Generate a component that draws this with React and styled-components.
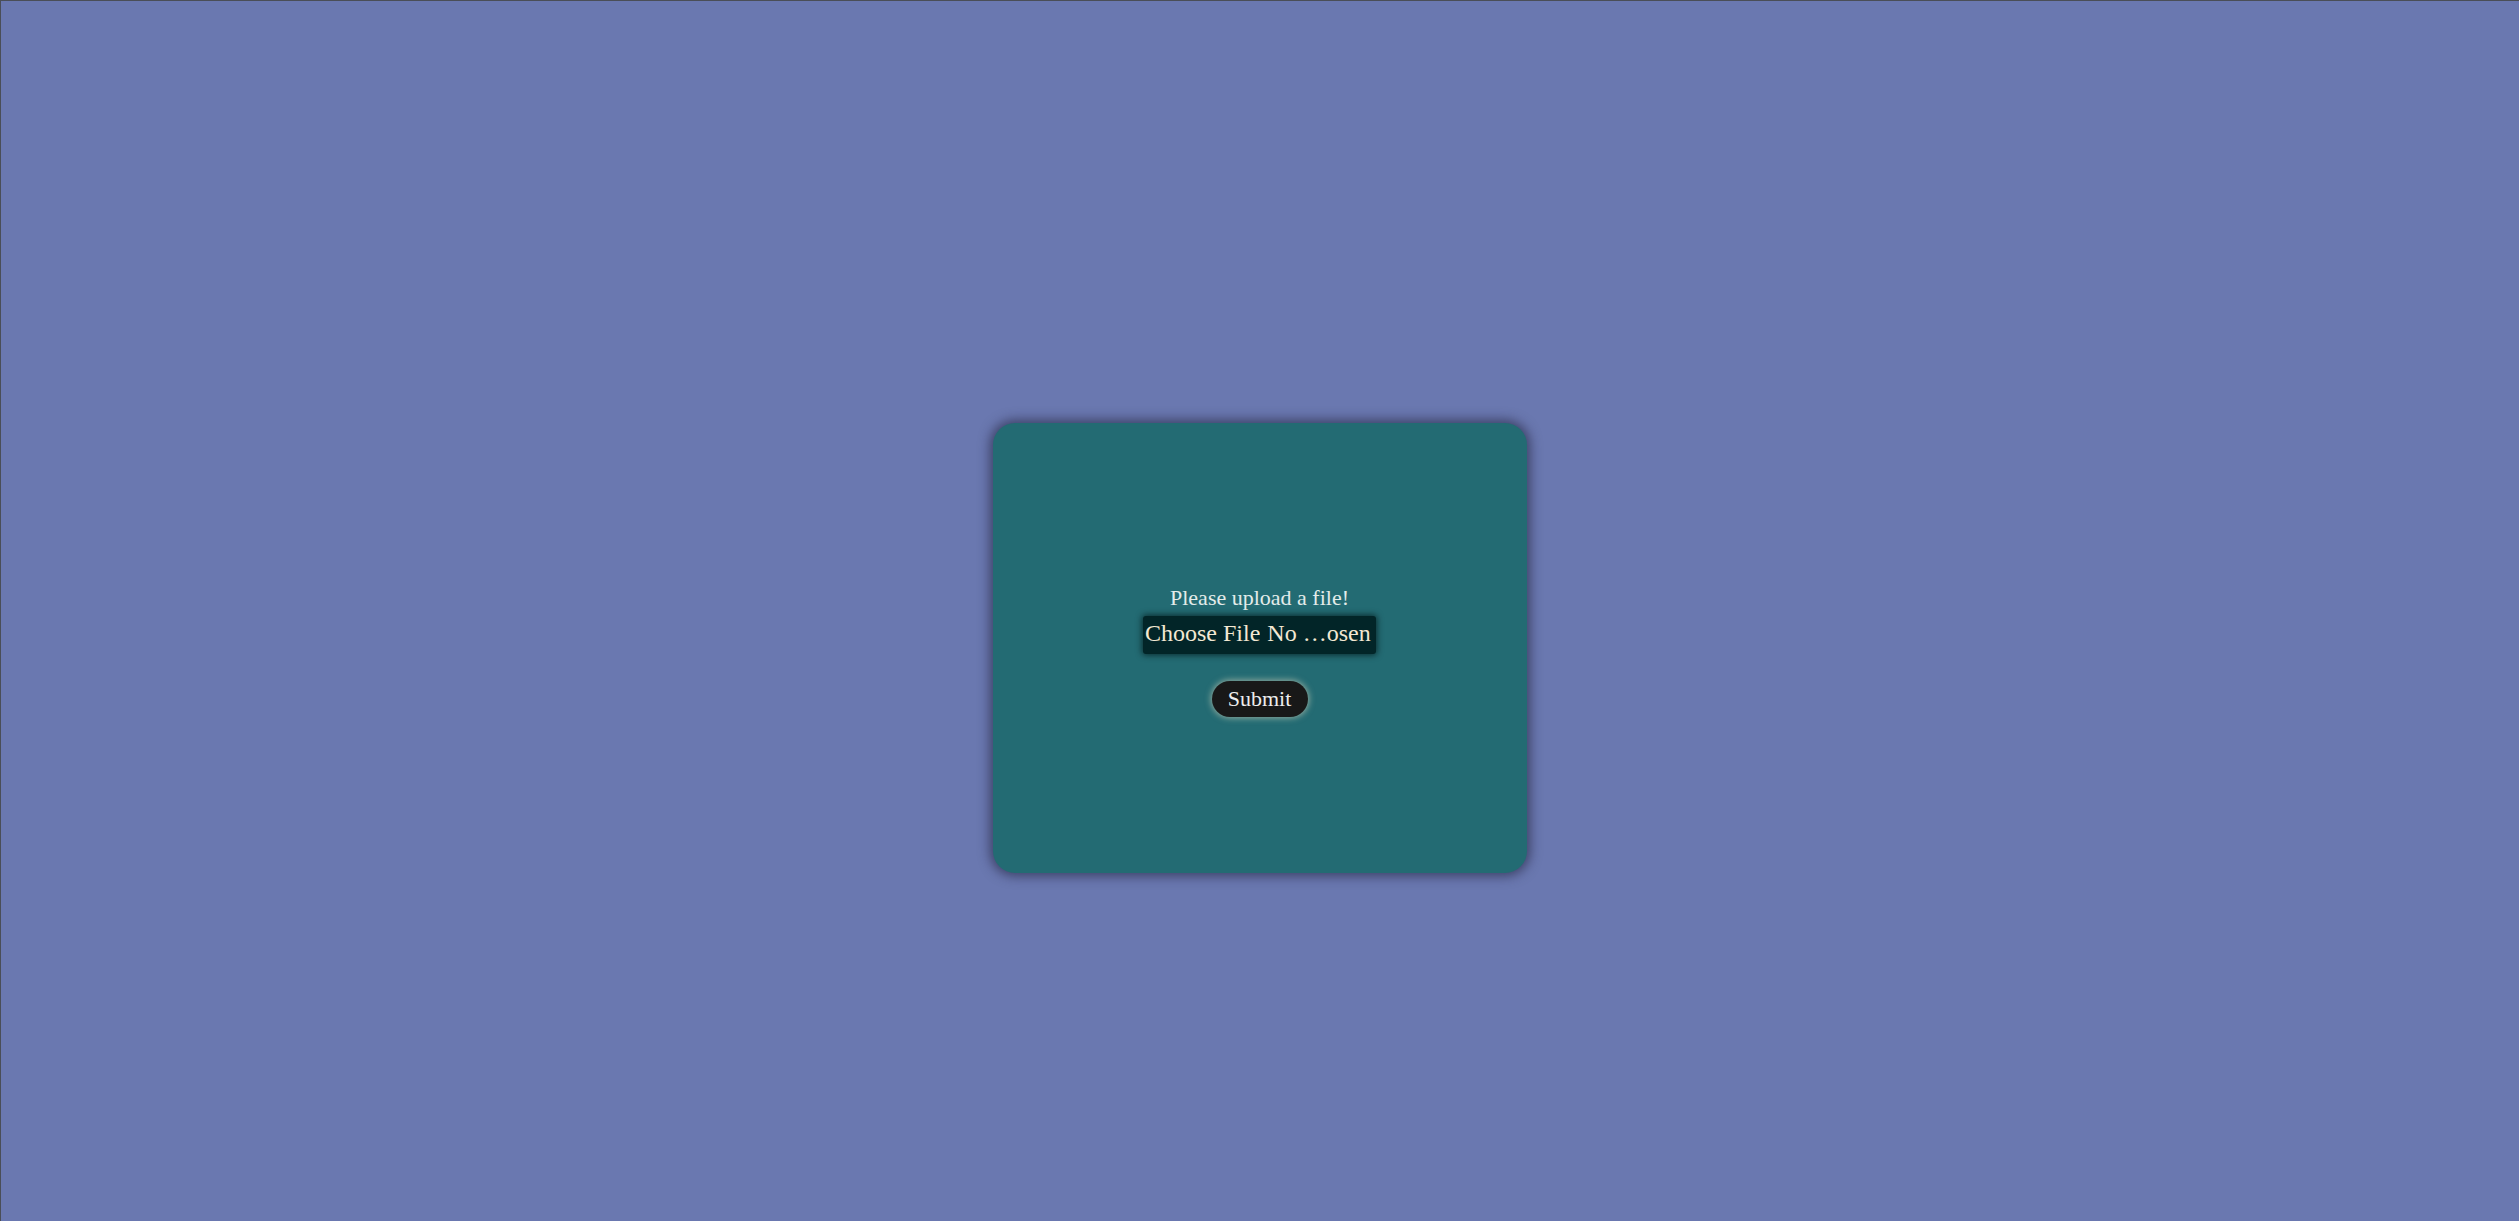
import React from 'react';
import styled, { createGlobalStyle } from 'styled-components';

const GlobalStyle = createGlobalStyle`
  html, body {
    margin: 0;
    padding: 0;
  }
  body {
    font-family: 'Liberation Serif', 'DejaVu Serif', serif;
    background-color: #6a78b0;
  }
`;

const Page = styled.div`
  box-sizing: border-box;
  min-height: 100vh;
  width: 100vw;
  display: flex;
  justify-content: center;
  align-items: flex-start;
  padding-top: 422px;
  background-color: #6a78b0;
  border-top: 1px solid #4a4e57;
  border-left: 1px solid #4a4e57;
`;

const Card = styled.div`
  width: 534px;
  height: 450px;
  margin-left: -1px;
  background-color: #236b73;
  border-radius: 22px;
  box-shadow: 0 0 12px 3px rgba(40, 42, 70, 0.7);
  display: flex;
  flex-direction: column;
  align-items: center;
  justify-content: center;
`;

const Form = styled.form`
  display: flex;
  flex-direction: column;
  align-items: center;
  padding-top: 5px;
`;

const Title = styled.p`
  margin: 0 0 5px;
  font-size: 22px;
  line-height: 26px;
  color: #e3ecea;
`;

const FileInput = styled.input`
  box-sizing: border-box;
  width: 233px;
  height: 38px;
  padding: 4px 2px 0;
  font-family: 'Liberation Serif', 'DejaVu Serif', serif;
  font-size: 24px;
  color: #f3e8d3;
  background-color: #022528;
  border-radius: 3px;
  box-shadow: 0 0 6px 1px rgba(0, 20, 22, 0.75);
  overflow: hidden;

  &::file-selector-button {
    font-family: 'Liberation Serif', 'DejaVu Serif', serif;
    font-size: 24px;
    color: inherit;
    background: none;
    border: none;
    padding: 0;
    margin: 0 7px 0 0;
  }
`;

const SubmitButton = styled.button`
  margin-top: 27px;
  width: 96px;
  height: 36px;
  padding: 0;
  font-family: inherit;
  font-size: 22px;
  color: #ededed;
  background-color: #181818;
  border: none;
  border-radius: 18px;
  box-shadow: 0 0 6px 1px rgba(240, 225, 195, 0.55);
  cursor: pointer;
`;

const App = () => {
  return (
    <>
      <GlobalStyle />
      <Page>
        <Card>
          <Form onSubmit={(e) => e.preventDefault()}>
            <Title>Please upload a file!</Title>
            <FileInput type="file" />
            <SubmitButton type="submit">Submit</SubmitButton>
          </Form>
        </Card>
      </Page>
    </>
  );
};

export default App;
